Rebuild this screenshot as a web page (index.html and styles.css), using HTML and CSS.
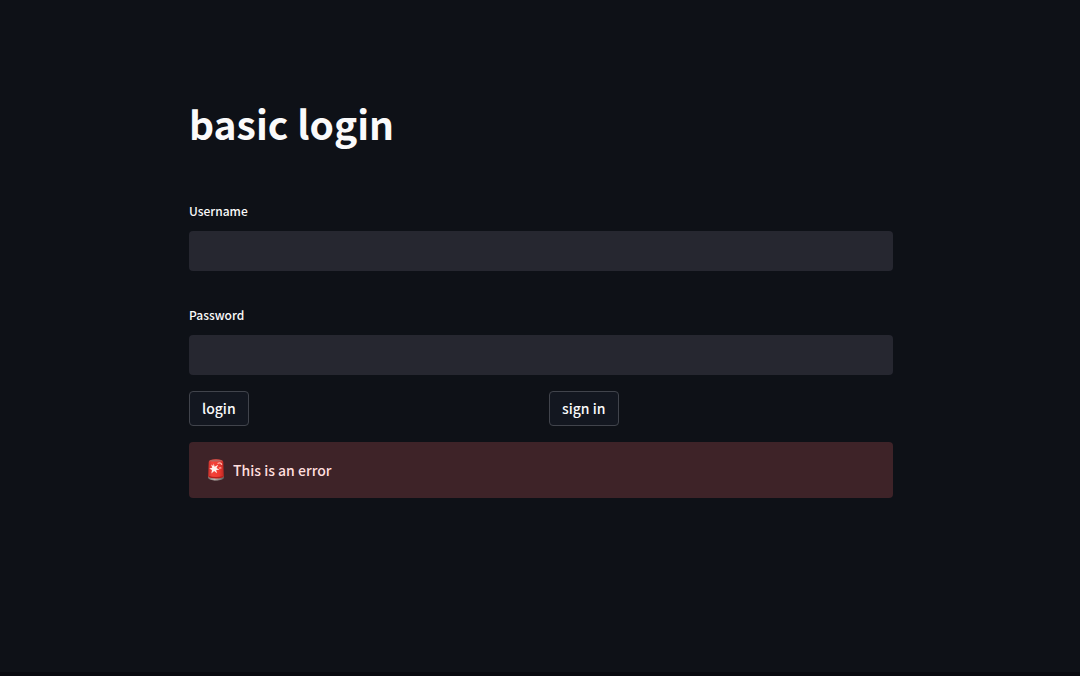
FILE: index.html
```html
<!DOCTYPE html>
<html lang="en">
<head>
<meta charset="utf-8">
<meta name="viewport" content="width=device-width, initial-scale=1">
<title>basic login</title>
<link rel="stylesheet" href="styles.css">
</head>
<body>
<main class="page">
  <form class="login">
    <h1 class="title">basic login</h1>
    <div class="field">
      <label class="label" for="username">Username</label>
      <input class="input" id="username" type="text">
    </div>
    <div class="field">
      <label class="label" for="password">Password</label>
      <input class="input" id="password" type="password">
    </div>
    <div class="actions">
      <div><button class="button" type="button">login</button></div>
      <div><button class="button" type="button">sign in</button></div>
    </div>
    <div class="alert" role="alert">
      <svg class="siren" viewBox="0 0 18 24" aria-hidden="true">
        <defs>
          <linearGradient id="glass" x1="0" x2="1" y1="0" y2="0">
            <stop offset="0" stop-color="#c9322c"/>
            <stop offset="0.25" stop-color="#f4443b"/>
            <stop offset="0.7" stop-color="#f03a30"/>
            <stop offset="1" stop-color="#bd2823"/>
          </linearGradient>
          <linearGradient id="base" x1="0" x2="1" y1="0" y2="0">
            <stop offset="0" stop-color="#6f6b69"/>
            <stop offset="0.4" stop-color="#b9b3ad"/>
            <stop offset="1" stop-color="#5d5856"/>
          </linearGradient>
        </defs>
        <path d="M1 18v1.500c0 4 16 4 16 0V18z" fill="url(#base)"/>
        <path d="M1.700 4Q1.800 1.200 9 1.200T16.300 4l.5 14c0 3.200-15.600 3.200-15.600 0z" fill="url(#glass)"/>
        <path d="M2.300 3.200Q3.500 1.500 9 1.500t6.700 1.700Q9 4 2.300 3.200z" fill="#b9625d"/>
        <path d="M1.200 17.800q7.800 2.600 15.600 0c0 3.400-15.600 3.400-15.600 0z" fill="#b3211d"/>
        <path d="M10.500 5.500q3.800-1.500 4.200 1.300" fill="none" stroke="#ffb0a8" stroke-width="1.300"/>
        <path d="M11.500 9.500l2.600-.8.500 1.800-2.200.6z" fill="#ff8c82"/>
        <path d="M6.700 5.500l.9 3.200 3.600-2-1.700 3.300 3 1.700-3.300.3.800 3.200-2.900-2.100-2.700 2.300.6-3.500-2.700-1.400 2.900-.7-1-3.200 2 1.400z" fill="#fff1ed"/>
      </svg>
      <span>This is an error</span>
    </div>
  </form>
</main>
</body>
</html>
```
FILE: styles.css
```css
* {
  box-sizing: border-box;
}

body {
  margin: 0;
  min-height: 100vh;
  display: flex;
  background: #0e1117;
  color: #fafafa;
  border-bottom: 4px solid #090a10;
  font-family: "Source Sans Pro", "Noto Sans CJK SC", sans-serif;
  font-size: 14px;
  line-height: 24px;
}

.page {
  flex: 1;
  padding: 95px 16px 80px 18px;
}

.login {
  max-width: 704px;
  margin: 0 auto;
  display: flex;
  flex-direction: column;
  gap: 16px;
}

.title {
  margin: 0 0 32px;
  font-size: 39px;
  font-weight: 700;
  line-height: 56px;
}

.field {
  display: flex;
  flex-direction: column;
  gap: 8px;
}

.field + .field {
  margin-top: 16px;
}

.label {
  font-size: 12px;
  font-weight: 500;
}

.input {
  width: 100%;
  height: 40px;
  padding: 8px 12px;
  border: 0;
  border-radius: 4px;
  background: #262730;
  color: inherit;
  font: inherit;
}

.actions {
  display: grid;
  grid-template-columns: 1fr 1fr;
  gap: 16px;
}

.button {
  display: block;
  padding: 4px 12px 5px;
  border: 1px solid #41444c;
  border-radius: 4px;
  background: #131720;
  color: inherit;
  font: inherit;
  font-weight: 500;
}

.alert {
  display: flex;
  align-items: center;
  gap: 8px;
  padding: 16px 18px;
  border-radius: 4px;
  background: #3e2328;
  color: #ffdede;
  font-weight: 500;
}

.siren {
  width: 18px;
  height: 24px;
}
```
